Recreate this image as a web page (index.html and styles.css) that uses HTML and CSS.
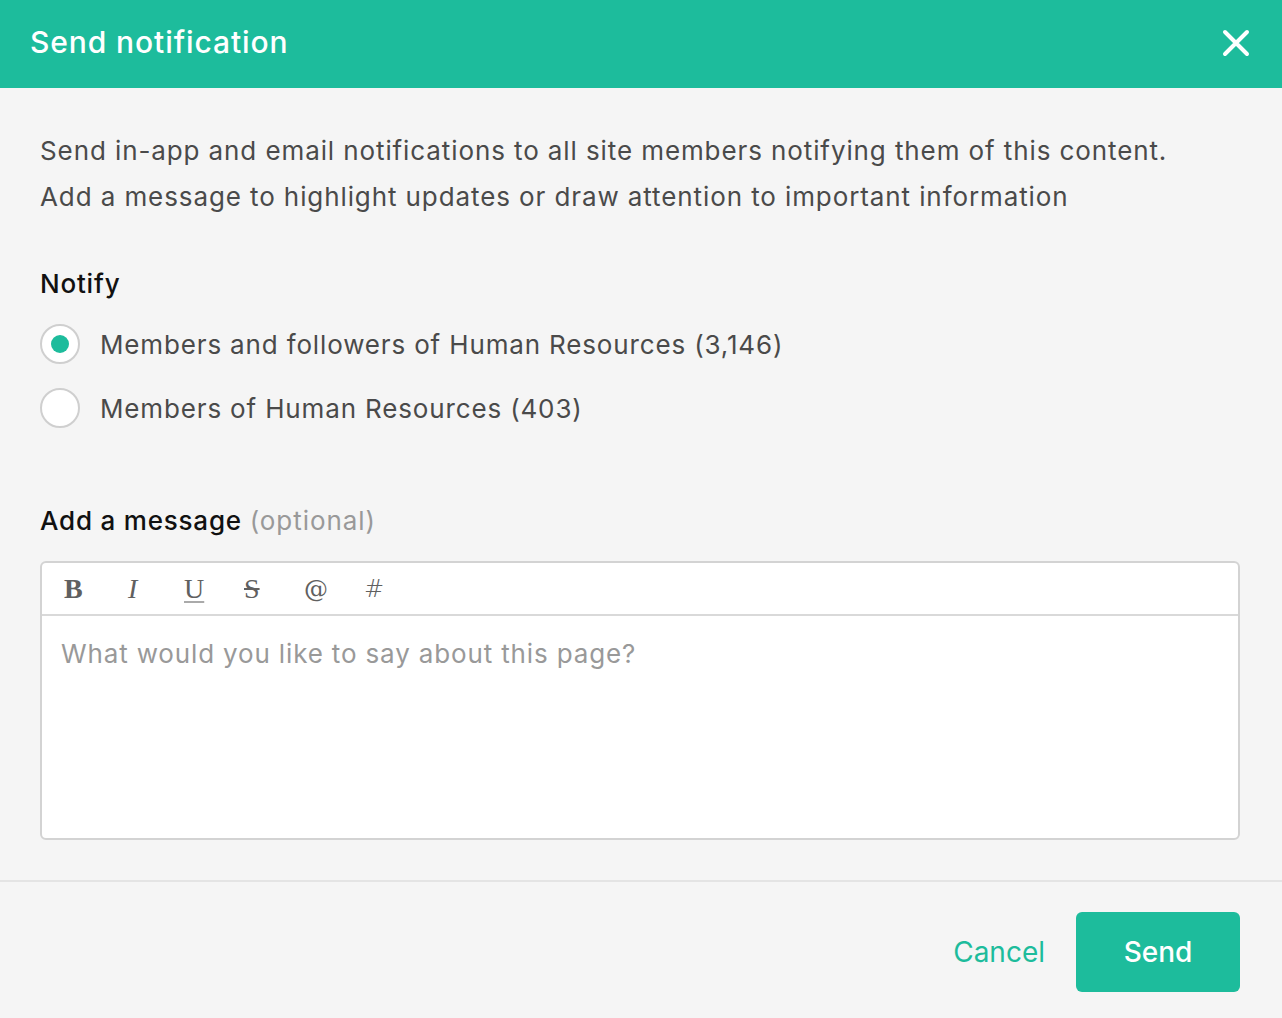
FILE: index.html
```html
<!DOCTYPE html>
<html>
<head>
<meta charset="utf-8">
<link rel="stylesheet" href="styles.css">
</head>
<body>
<div class="modal">
  <header class="modal-header">
    <h1 class="modal-title">Send notification</h1>
    <button class="close-btn" aria-label="Close">
      <svg width="28" height="28" viewBox="0 0 28 28"><path d="M3 3 L25 25 M25 3 L3 25" stroke="#fff" stroke-width="4" stroke-linecap="round"/></svg>
    </button>
  </header>
  <main class="modal-body">
    <p class="intro">Send in-app and email notifications to all site members notifying them of this content.<br>Add a message to highlight updates or draw attention to important information</p>
    <div class="section-label notify-label">Notify</div>
    <div class="radio-group">
      <label class="radio-row"><span class="radio checked"></span><span class="radio-text">Members and followers of Human Resources (3,146)</span></label>
      <label class="radio-row"><span class="radio"></span><span class="radio-text">Members of Human Resources (403)</span></label>
    </div>
    <div class="section-label message-label">Add a message <span class="optional">(optional)</span></div>
    <div class="editor">
      <div class="toolbar">
        <span class="tool tool-b">B</span>
        <span class="tool tool-i">I</span>
        <span class="tool tool-u">U</span>
        <span class="tool tool-s">S</span>
        <span class="tool tool-at">@</span>
        <span class="tool tool-hash">#</span>
      </div>
      <div class="editor-area">What would you like to say about this page?</div>
    </div>
  </main>
  <footer class="modal-footer">
    <button class="cancel-btn">Cancel</button>
    <button class="send-btn">Send</button>
  </footer>
</div>
</body>
</html>
```
FILE: styles.css
```css
* { box-sizing: border-box; }
html, body { margin: 0; padding: 0; }
body {
  background: #f5f5f5;
  font-family: "Inter", "Liberation Sans", sans-serif;
  color: #444;
}
.modal {
  width: 1282px;
  height: 1018px;
  display: flex;
  flex-direction: column;
  background: #f5f5f5;
}
.modal-header {
  height: 88px;
  background: #1dbc9c;
  display: flex;
  align-items: center;
  justify-content: space-between;
  padding: 0 32px 2px 30px;
  flex-shrink: 0;
}
.modal-title {
  margin: 0 0 2px 0;
  color: #fff;
  font-size: 30px;
  line-height: 36px;
  font-weight: 500;
  letter-spacing: 0.9px;
}
.close-btn {
  background: none;
  border: 0;
  padding: 0;
  width: 28px;
  height: 28px;
  display: flex;
  cursor: pointer;
}
.modal-body {
  padding: 40px 42px 0 40px;
  flex: 1;
}
.intro {
  margin: 0;
  font-size: 26px;
  line-height: 46px;
  color: #4a4a4a;
  letter-spacing: 0.9px;
}
.section-label {
  font-size: 26px;
  line-height: 36px;
  font-weight: 500;
  color: #111;
  letter-spacing: 0.8px;
}
.notify-label { margin-top: 46px; }
.radio-group {
  margin-top: 22px;
  display: flex;
  flex-direction: column;
  gap: 24px;
}
.radio-row {
  display: flex;
  align-items: center;
  gap: 20px;
  height: 40px;
}
.radio {
  width: 40px;
  height: 40px;
  border-radius: 50%;
  border: 2px solid #cfcfcf;
  background: #fff;
  position: relative;
  flex-shrink: 0;
}
.radio.checked::after {
  content: "";
  position: absolute;
  left: 9px;
  top: 9px;
  width: 18px;
  height: 18px;
  border-radius: 50%;
  background: #1dbc9c;
}
.radio-text {
  font-size: 26px;
  color: #4a4a4a;
  letter-spacing: 0.85px;
}
.message-label { margin-top: 75px; }
.optional { font-weight: 400; color: #999; letter-spacing: 0.95px; }
.editor {
  margin-top: 22px;
  height: 279px;
  border: 2px solid #d3d3d3;
  border-radius: 6px;
  background: #fff;
  display: flex;
  flex-direction: column;
}
.toolbar {
  height: 53px;
  border-bottom: 2px solid #d9d9d9;
  display: flex;
  align-items: center;
  padding-left: 22px;
  gap: 0;
}
.tool {
  width: 60px;
  font-family: "Liberation Serif", "DejaVu Serif", serif;
  font-size: 28px;
  color: #606060;
  text-align: left;
}
.tool-b { font-weight: 700; }
.tool-i { font-style: italic; padding-left: 4px; }
.tool-u { text-decoration: underline; text-decoration-color: #aaa; text-underline-offset: 3px; }
.tool-s { text-decoration: line-through; }
.tool-at { font-family: "DejaVu Serif", serif; font-size: 24px; }
.tool-hash { font-family: "DejaVu Sans", sans-serif; font-size: 24px; font-weight: 300; }
.editor-area {
  padding: 18px 19px;
  font-size: 26px;
  line-height: 40px;
  color: #999;
  letter-spacing: 0.85px;
}
.modal-footer {
  height: 138px;
  border-top: 2px solid #e4e4e4;
  display: flex;
  align-items: center;
  justify-content: flex-end;
  padding: 4px 42px 0 40px;
  gap: 31px;
  flex-shrink: 0;
}
.cancel-btn {
  background: none;
  border: 0;
  padding: 0;
  font-family: inherit;
  font-size: 28px;
  color: #1dbc9c;
  cursor: pointer;
}
.send-btn {
  width: 164px;
  height: 80px;
  border: 0;
  border-radius: 6px;
  background: #1dbc9c;
  color: #fff;
  font-family: inherit;
  font-size: 28px;
  font-weight: 500;
  cursor: pointer;
}
```
